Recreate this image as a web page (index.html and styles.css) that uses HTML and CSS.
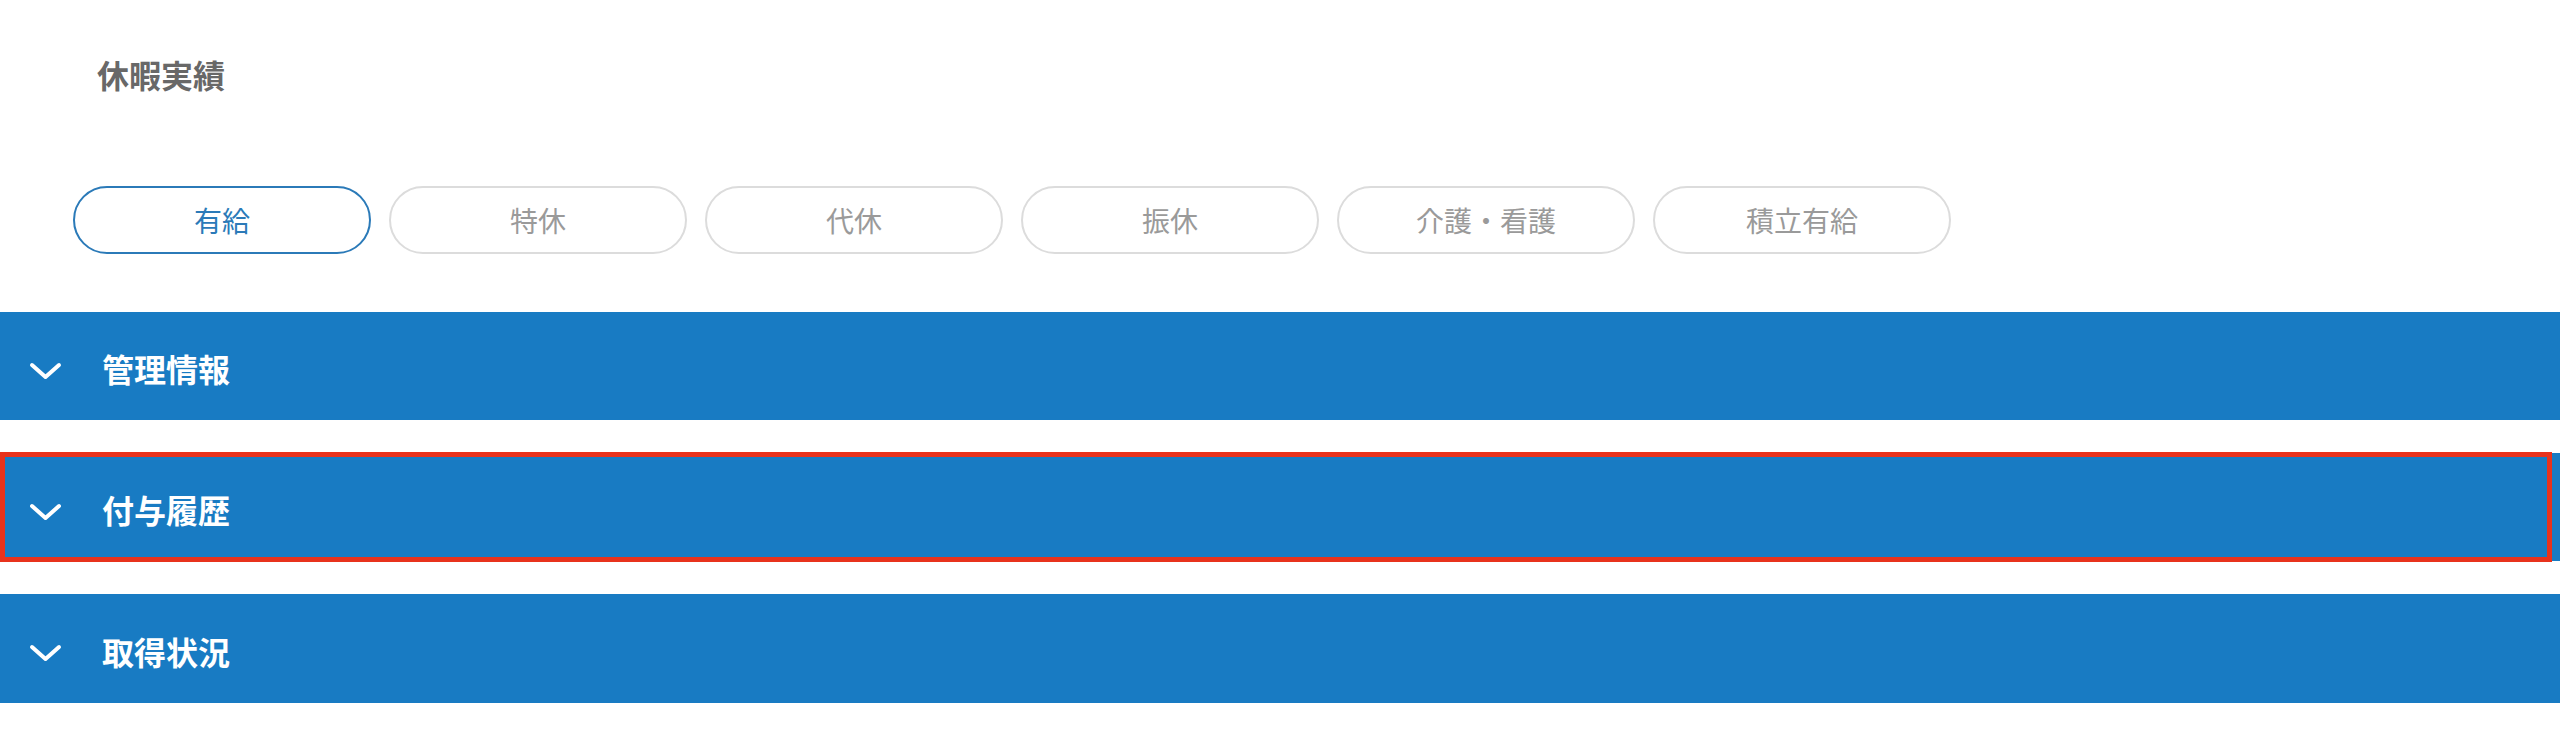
FILE: index.html
```html
<!DOCTYPE html>
<html lang="ja">
<head>
<meta charset="utf-8">
<title>休暇実績</title>
<link rel="stylesheet" href="styles.css">
</head>
<body>
<div class="page">
  <h1 class="title">休暇実績</h1>
  <div class="tabs">
    <button class="tab is-active">有給</button>
    <button class="tab">特休</button>
    <button class="tab">代休</button>
    <button class="tab">振休</button>
    <button class="tab">介護・看護</button>
    <button class="tab">積立有給</button>
  </div>
  <div class="panels">
    <div class="panel">
      <svg class="chevron" viewBox="0 0 36 20" width="36" height="20" aria-hidden="true"><polyline points="5,4 18.5,16 32,4" fill="none" stroke="#fff" stroke-width="4" stroke-linecap="round" stroke-linejoin="round"/></svg>
      <span class="panel-label">管理情報</span>
    </div>
    <div class="panel is-highlighted">
      <svg class="chevron" viewBox="0 0 36 20" width="36" height="20" aria-hidden="true"><polyline points="5,4 18.5,16 32,4" fill="none" stroke="#fff" stroke-width="4" stroke-linecap="round" stroke-linejoin="round"/></svg>
      <span class="panel-label">付与履歴</span>
      <span class="highlight-frame"></span>
    </div>
    <div class="panel">
      <svg class="chevron" viewBox="0 0 36 20" width="36" height="20" aria-hidden="true"><polyline points="5,4 18.5,16 32,4" fill="none" stroke="#fff" stroke-width="4" stroke-linecap="round" stroke-linejoin="round"/></svg>
      <span class="panel-label">取得状況</span>
    </div>
  </div>
</div>
</body>
</html>
```
FILE: styles.css
```css
* { box-sizing: border-box; }

html, body {
  margin: 0;
  padding: 0;
  background: #ffffff;
}

body {
  font-family: "Noto Sans CJK JP", "Noto Sans", sans-serif;
  width: 2560px;
  height: 730px;
  overflow: hidden;
}

.page {
  display: flex;
  flex-direction: column;
}

.title {
  margin: 58px 0 0 97px;
  font-size: 32px;
  line-height: 32px;
  font-weight: 700;
  color: #686868;
}

.tabs {
  display: flex;
  gap: 18px;
  margin: 96px 0 0 73px;
}

.tab {
  width: 298px;
  height: 68px;
  display: flex;
  align-items: center;
  justify-content: center;
  border: 2px solid #dcdcdc;
  border-radius: 34px;
  background: #ffffff;
  font-family: "Noto Sans CJK JP", "Noto Sans", sans-serif;
  font-size: 28px;
  font-weight: 400;
  color: #9a9a9a;
  padding: 0;
  cursor: pointer;
}

.tab.is-active {
  border-color: #2b7ab8;
  color: #2b7ab8;
}

.panels {
  display: flex;
  flex-direction: column;
  gap: 33px;
  margin-top: 58px;
}

.panel {
  position: relative;
  height: 108px;
  background: #187bc3;
  display: flex;
  align-items: center;
  padding-left: 27px;
  gap: 39px;
}

.panel:last-child {
  height: 109px;
}

.chevron {
  flex: none;
  display: block;
  margin-top: 9px;
}

.panel-label {
  font-size: 32px;
  line-height: 32px;
  font-weight: 700;
  color: #ffffff;
  margin-top: 4px;
}

.highlight-frame {
  position: absolute;
  top: -1px;
  left: 0;
  right: 8px;
  bottom: -1px;
  border: 5px solid #e8321c;
  pointer-events: none;
}
```
